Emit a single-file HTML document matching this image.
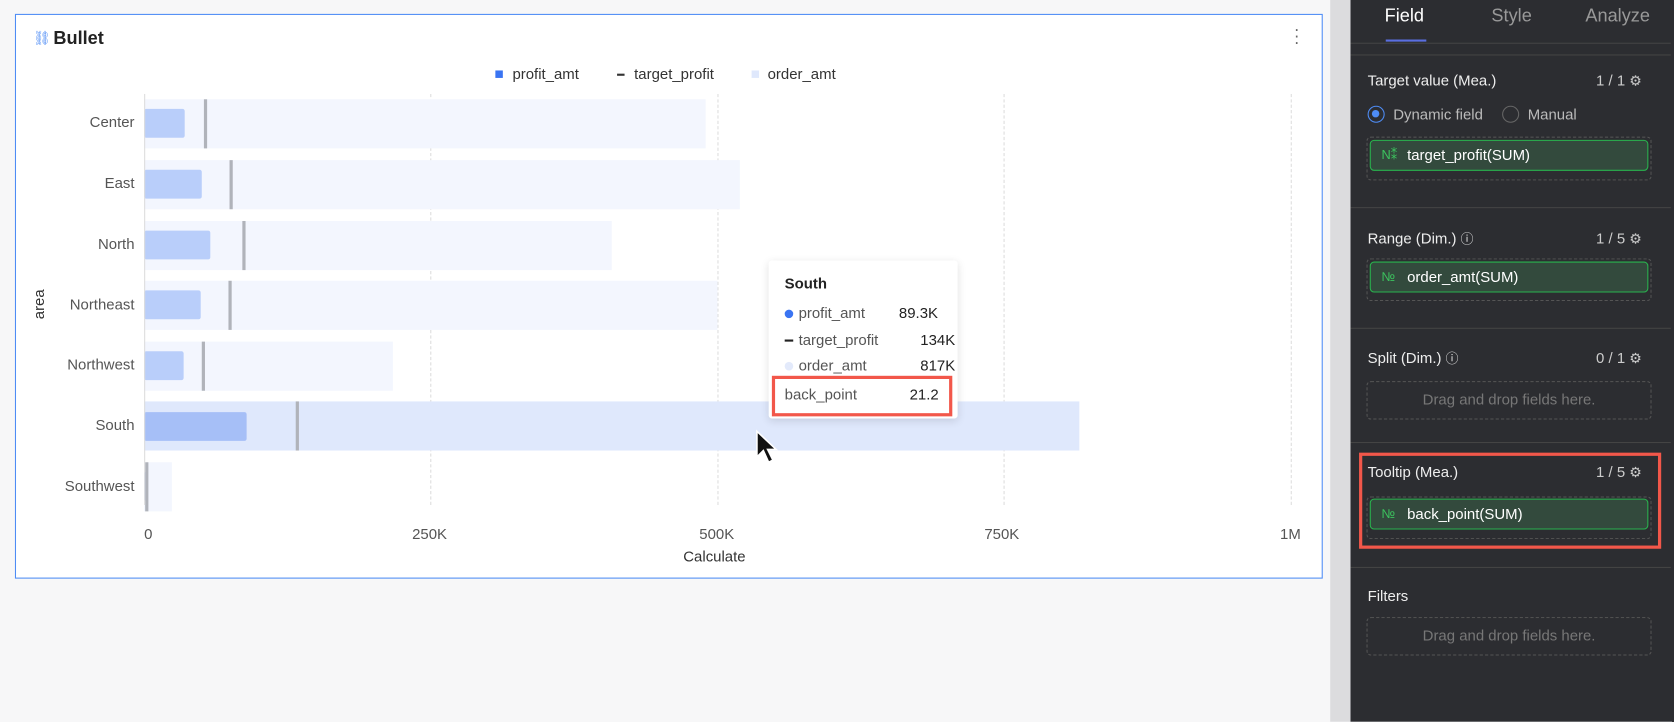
<!DOCTYPE html>
<html><head><style>
*{box-sizing:border-box;margin:0;padding:0}
body{width:1674px;height:676px;overflow:hidden;background:#f7f7f8;font-family:"Liberation Sans",Arial,sans-serif;position:relative}
#wrap{position:absolute;left:0;top:0;width:1568px;height:634px;transform:scale(1.0676);transform-origin:0 0}
.a{position:absolute}
.card{left:14px;top:13px;width:1225px;height:529px;background:#fff;border:1.5px solid #4e8cf5}
.lbl{font-size:14px;color:#555;text-align:right;width:110px}
.bg{background:#f3f6fe;height:46px}
.pf{background:#b9cefa;height:27px;border-radius:2px}
.tg{background:#b0b3ba;width:3px;height:46px}
.grid{width:0;border-left:1px dashed #ddd;top:88px;height:385px}
.tick{font-size:14px;color:#555;top:492px}
.panel{left:1265px;top:0;width:310px;height:676px;background:#2c2d31}
.w{color:#eee;font-size:14px}
.g{color:#bbb;font-size:14px}
.pill{border:1px dashed #555;border-radius:4px}
.field{background:#334a3d;border:1.5px solid #29b34e;border-radius:4px;color:#fff;font-size:14px;padding-left:34px;line-height:26px;height:29px}
.field i{position:absolute;left:10px;top:0;color:#3cc35e;font-style:normal;font-size:12px}
.sep{height:1px;background:#444;left:1265px;width:300px}
.drop{color:#777;font-size:14px;text-align:center;line-height:33px}
.gear{font-size:13px;color:#ccc}
</style></head><body>
<div id="wrap">
<div class="a" style="left:1246px;top:0;width:19px;height:676px;background:#dcdcde"></div>
<div class="a card"></div>
<div class="a" style="left:31px;top:28px;color:#4e8cf5;font-size:13px">⛓</div>
<div class="a" style="left:50px;top:26px;font-weight:bold;font-size:17px;color:#222">Bullet</div>
<div class="a" style="left:1212px;top:26px;color:#666;font-size:16px;line-height:6px">·<br>·<br>·</div>
<div class="a" style="left:464px;top:66px;width:7px;height:7px;background:#3a74f2"></div>
<div class="a" style="left:480px;top:61px;font-size:14px;color:#333">profit_amt</div>
<div class="a" style="left:578px;top:69px;width:7px;height:2px;background:#333"></div>
<div class="a" style="left:594px;top:61px;font-size:14px;color:#333">target_profit</div>
<div class="a" style="left:704px;top:66px;width:7px;height:7px;background:#dfe8fc"></div>
<div class="a" style="left:719px;top:61px;font-size:14px;color:#333">order_amt</div>
<div class="a grid" style="left:403px"></div><div class="a grid" style="left:672px"></div><div class="a grid" style="left:940px"></div><div class="a grid" style="left:1209px"></div>
<div class="a bg" style="left:135px;top:93px;width:526px"></div>
<div class="a bg" style="left:135px;top:150px;width:558px"></div>
<div class="a bg" style="left:135px;top:207px;width:438px"></div>
<div class="a bg" style="left:135px;top:263px;width:537px"></div>
<div class="a bg" style="left:135px;top:320px;width:233px"></div>
<div class="a bg" style="left:135px;top:376px;width:876px;background:#dfe8fc"></div>
<div class="a bg" style="left:135px;top:433px;width:26px"></div>
<div class="a pf" style="left:135px;top:102px;width:38px"></div>
<div class="a pf" style="left:135px;top:159px;width:54px"></div>
<div class="a pf" style="left:135px;top:216px;width:62px"></div>
<div class="a pf" style="left:135px;top:272px;width:53px"></div>
<div class="a pf" style="left:135px;top:329px;width:37px"></div>
<div class="a pf" style="left:135px;top:386px;width:96px;background:#a6bff7"></div>
<div class="a pf" style="left:135px;top:442px;width:3px"></div>
<div class="a tg" style="left:191px;top:93px"></div>
<div class="a tg" style="left:215px;top:150px"></div>
<div class="a tg" style="left:227px;top:207px"></div>
<div class="a tg" style="left:214px;top:263px"></div>
<div class="a tg" style="left:189px;top:320px"></div>
<div class="a tg" style="left:277px;top:376px"></div>
<div class="a tg" style="left:136px;top:433px"></div>
<div class="a" style="left:135px;top:88px;width:1px;height:385px;background:#ddd"></div>
<div class="a lbl" style="left:16px;top:106px">Center</div>
<div class="a lbl" style="left:16px;top:163px">East</div>
<div class="a lbl" style="left:16px;top:220px">North</div>
<div class="a lbl" style="left:16px;top:277px">Northeast</div>
<div class="a lbl" style="left:16px;top:333px">Northwest</div>
<div class="a lbl" style="left:16px;top:390px">South</div>
<div class="a lbl" style="left:16px;top:447px">Southwest</div>
<div class="a" style="left:22px;top:277px;transform:rotate(-90deg);font-size:14px;color:#333">area</div>
<div class="a tick" style="left:135px">0</div>
<div class="a tick" style="left:386px">250K</div>
<div class="a tick" style="left:655px">500K</div>
<div class="a tick" style="left:922px">750K</div>
<div class="a tick" style="left:1199px">1M</div>
<div class="a" style="left:640px;top:513px;font-size:14px;color:#333">Calculate</div>
<div class="a" style="left:720px;top:244px;width:177px;height:148px;background:#fff;box-shadow:0 2px 8px rgba(0,0,0,.12);border-radius:3px"></div>
<div class="a" style="left:735px;top:257px;font-size:14px;font-weight:bold;color:#222">South</div>
<div class="a" style="left:735px;top:290px;width:8px;height:8px;border-radius:50%;background:#3a74f2"></div>
<div class="a" style="left:748px;top:285px;font-size:14px;color:#555">profit_amt</div>
<div class="a" style="left:842px;top:285px;font-size:14px;color:#222">89.3K</div>
<div class="a" style="left:735px;top:318px;width:8px;height:2px;background:#222"></div>
<div class="a" style="left:748px;top:310px;font-size:14px;color:#555">target_profit</div>
<div class="a" style="left:862px;top:310px;font-size:14px;color:#222">134K</div>
<div class="a" style="left:735px;top:339px;width:8px;height:8px;border-radius:50%;background:#e3eafb"></div>
<div class="a" style="left:748px;top:334px;font-size:14px;color:#555">order_amt</div>
<div class="a" style="left:862px;top:334px;font-size:14px;color:#222">817K</div>
<div class="a" style="left:723px;top:352px;width:169px;height:38px;border:3px solid #f2574a"></div>
<div class="a" style="left:735px;top:361px;font-size:14px;color:#555">back_point</div>
<div class="a" style="left:852px;top:361px;font-size:14px;color:#222">21.2</div>
<svg class="a" style="left:706px;top:402px" width="24" height="34" viewBox="0 0 24 34"><path d="M3 2 L3 26 L9 20 L14 31 L18 29 L13 19 L21 19 Z" fill="#111" stroke="#fff" stroke-width="1.5"/></svg>
<div class="a panel"></div>
<div class="a" style="left:1297px;top:5px;font-size:17px;color:#fff">Field</div>
<div class="a" style="left:1397px;top:5px;font-size:17px;color:#999">Style</div>
<div class="a" style="left:1485px;top:5px;font-size:17px;color:#999">Analyze</div>
<div class="a" style="left:1298px;top:37px;width:38px;height:2px;background:#5a6ee0"></div>
<div class="a sep" style="top:40px"></div>
<div class="a sep" style="top:51px"></div>
<div class="a" style="left:1667px;top:198px;width:2px;height:478px;background:#444"></div>
<div class="a w" style="left:1281px;top:67px">Target value (Mea.)</div>
<div class="a w" style="left:1495px;top:67px;color:#ccc">1 / 1 <span class="gear">⚙</span></div>
<div class="a" style="left:1281px;top:99px;width:16px;height:16px;border-radius:50%;border:1.5px solid #4e8cf5"><div style="margin:3px;width:7px;height:7px;border-radius:50%;background:#4e8cf5"></div></div>
<div class="a g" style="left:1305px;top:99px">Dynamic field</div>
<div class="a" style="left:1407px;top:99px;width:16px;height:16px;border-radius:50%;border:1px solid #666"></div>
<div class="a g" style="left:1431px;top:99px">Manual</div>
<div class="a pill" style="left:1280px;top:128px;width:267px;height:41px"></div>
<div class="a field" style="left:1283px;top:131px;width:261px"><i>N⁑</i>target_profit(SUM)</div>
<div class="a sep" style="top:194px"></div>
<div class="a w" style="left:1281px;top:215px">Range (Dim.) <span style="font-size:12px">ⓘ</span></div>
<div class="a w" style="left:1495px;top:215px;color:#ccc">1 / 5 <span class="gear">⚙</span></div>
<div class="a pill" style="left:1280px;top:242px;width:267px;height:40px"></div>
<div class="a field" style="left:1283px;top:245px;width:261px"><i>№</i>order_amt(SUM)</div>
<div class="a sep" style="top:307px"></div>
<div class="a w" style="left:1281px;top:327px">Split (Dim.) <span style="font-size:12px">ⓘ</span></div>
<div class="a w" style="left:1495px;top:327px;color:#ccc">0 / 1 <span class="gear">⚙</span></div>
<div class="a pill drop" style="left:1280px;top:357px;width:267px;height:36px">Drag and drop fields here.</div>
<div class="a sep" style="top:414px"></div>
<div class="a" style="left:1273px;top:424px;width:283px;height:90px;border:3px solid #f2574a"></div>
<div class="a w" style="left:1281px;top:434px">Tooltip (Mea.)</div>
<div class="a w" style="left:1495px;top:434px;color:#ccc">1 / 5 <span class="gear">⚙</span></div>
<div class="a pill" style="left:1280px;top:465px;width:267px;height:40px"></div>
<div class="a field" style="left:1283px;top:467px;width:261px"><i>№</i>back_point(SUM)</div>
<div class="a sep" style="top:531px"></div>
<div class="a w" style="left:1281px;top:550px">Filters</div>
<div class="a pill drop" style="left:1280px;top:578px;width:267px;height:36px">Drag and drop fields here.</div>
</div>
</body></html>
